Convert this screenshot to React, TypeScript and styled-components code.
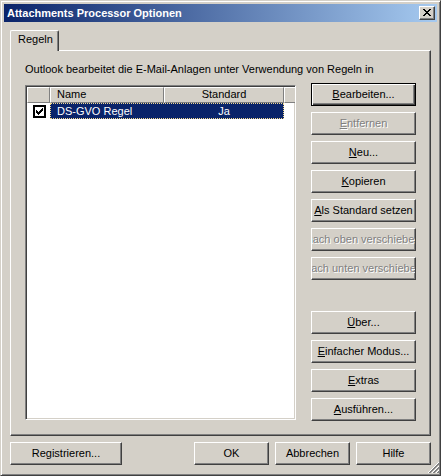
import React from "react";
import styled, { createGlobalStyle, css } from "styled-components";

const Global = createGlobalStyle`
  html, body { margin: 0; padding: 0; background: #d4d0c8; }
  body {
    font-family: "Liberation Sans", Arial, sans-serif;
    font-size: 11px;
    color: #000;
  }
  * { box-sizing: border-box; }
`;

const Window = styled.div`
  position: relative;
  width: 441px;
  height: 476px;
  display: flex;
  flex-direction: column;
  background: #d4d0c8;
  border: 1px solid;
  border-color: #d4d0c8 #404040 #404040 #d4d0c8;
  box-shadow: inset 1px 1px 0 #fff, inset -1px -1px 0 #808080;
  padding: 3px;
`;

const TitleBar = styled.div`
  height: 18px;
  flex: none;
  display: flex;
  align-items: center;
  justify-content: space-between;
  padding: 0 2px 0 3px;
  background: linear-gradient(to right, #0a246a, #a6caf0);
  color: #fff;
  font-weight: bold;
  font-size: 11px;
  white-space: nowrap;
`;

const CloseButton = styled.div`
  width: 16px;
  height: 14px;
  display: flex;
  align-items: center;
  justify-content: center;
  background: #d4d0c8;
  border: 1px solid;
  border-color: #fff #404040 #404040 #fff;
  box-shadow: inset -1px -1px 0 #808080;
  padding-right: 1px;
  padding-bottom: 1px;
`;

const Body = styled.div`
  flex: 1;
  display: flex;
  flex-direction: column;
  padding: 8px 6px 7px 6px;
`;

const TabStrip = styled.div`
  display: flex;
  height: 20px;
`;

const Tab = styled.div`
  position: relative;
  z-index: 1;
  width: 49px;
  height: 21px;
  margin-bottom: -1px;
  background: #d4d0c8;
  border-style: solid;
  border-width: 1px 1px 0 1px;
  border-color: #fff #404040 #fff #fff;
  border-radius: 2px 2px 0 0;
  box-shadow: inset -1px 0 0 #808080;
  padding: 2px 0 0 7px;
  line-height: 13px;
`;

const Panel = styled.div`
  height: 386px;
  border: 1px solid;
  border-color: #fff #404040 #404040 #fff;
  box-shadow: inset -1px -1px 0 #808080;
  padding: 12px 13px 13px 14px;
  display: grid;
  grid-template-columns: 271px 105px;
  grid-template-rows: 13px 338px;
  column-gap: 15px;
  row-gap: 7px;
`;

const Description = styled.div`
  grid-column: 1 / -1;
  line-height: 13px;
  white-space: nowrap;
`;

const ListFrame = styled.div`
  margin-top: 2px;
  height: 335px;
  background: #fff;
  border: 1px solid;
  border-color: #808080 #fff #fff #808080;
  box-shadow: inset 1px 1px 0 #404040, inset -1px -1px 0 #d4d0c8;
  padding: 1px;
  display: flex;
  flex-direction: column;
  overflow: hidden;
`;

const HeaderRow = styled.div`
  display: grid;
  grid-template-columns: 23px 114px 120px 1fr;
  height: 16px;
  flex: none;
`;

const HeaderCell = styled.div<{ $align?: "left" | "center" }>`
  background: #d4d0c8;
  border: 1px solid;
  border-color: #fff #808080 #808080 #fff;
  padding: 0 6px;
  line-height: 13px;
  text-align: ${(p) => p.$align ?? "left"};
  white-space: nowrap;
  overflow: hidden;
`;

const Row = styled.div`
  display: grid;
  grid-template-columns: 23px 234px;
  height: 16px;
  flex: none;
`;

const CheckCell = styled.div`
  display: flex;
  align-items: center;
  padding-left: 6px;
`;

const Checkbox = styled.div`
  width: 13px;
  height: 13px;
  border: 2px solid #000;
  background: #fff;
  display: flex;
  align-items: center;
  justify-content: center;
`;

const Selection = styled.div`
  display: grid;
  grid-template-columns: 114px 120px;
  background: #0a246a;
  color: #fff;
  outline: 1px dotted #f3d98e;
  outline-offset: -1px;
  line-height: 16px;
`;

const RowCell = styled.div<{ $align?: "left" | "center" }>`
  padding: 0 7px;
  text-align: ${(p) => p.$align ?? "left"};
  white-space: nowrap;
  overflow: hidden;
`;

const ButtonColumn = styled.div`
  display: flex;
  flex-direction: column;
  justify-content: space-between;
`;

const ButtonGroup = styled.div`
  display: flex;
  flex-direction: column;
  gap: 6px;
`;

const Button = styled.button<{ $w?: number; $default?: boolean }>`
  width: ${(p) => p.$w ?? 105}px;
  height: 23px;
  flex: none;
  display: flex;
  align-items: center;
  justify-content: center;
  overflow: hidden;
  white-space: nowrap;
  padding: 0 0 1px 0;
  margin: 0;
  font: inherit;
  font-size: 11px;
  color: #000;
  background: #d4d0c8;
  border: 1px solid;
  border-color: #fff #404040 #404040 #fff;
  box-shadow: inset -1px -1px 0 #808080;
  ${(p) =>
    p.$default &&
    css`
      border-color: #000;
      box-shadow: inset 1px 1px 0 #fff, inset -1px -1px 0 #404040,
        inset -2px -2px 0 #808080;
    `}
  &:disabled {
    color: #808080;
    text-shadow: 1px 1px 0 #fff;
  }
`;

const Key = styled.span`
  text-decoration: underline;
  text-underline-offset: 1px;
`;

const Footer = styled.div`
  display: flex;
  gap: 6px;
  margin-top: 6px;
`;

const Spacer = styled.div`
  flex: 1;
`;

const Grip = styled.svg`
  position: absolute;
  right: 1px;
  bottom: 1px;
`;

const closePixels = [
  "XX....XX",
  ".XX..XX.",
  "..XXXX..",
  "...XX...",
  "..XXXX..",
  ".XX..XX.",
  "XX....XX",
];

const checkPixels = [
  "......X",
  ".....XX",
  "X...XXX",
  "XX.XXX.",
  "XXXXX..",
  ".XXX...",
  "..X....",
];

const PixelIcon: React.FC<{ rows: string[] }> = ({ rows }) => (
  <svg
    width={rows[0].length}
    height={rows.length}
    shapeRendering="crispEdges"
    style={{ display: "block" }}
  >
    {rows.flatMap((r, y) =>
      r.split("").map((c, x) =>
        c === "X" ? <rect key={`${x}-${y}`} x={x} y={y} width={1} height={1} fill="#000" /> : null
      )
    )}
  </svg>
);

const gripLines: { c: number; color: string }[] = [
  { c: 11, color: "#fff" },
  { c: 12, color: "#808080" },
  { c: 13, color: "#808080" },
  { c: 15, color: "#fff" },
  { c: 16, color: "#808080" },
  { c: 17, color: "#808080" },
  { c: 19, color: "#fff" },
  { c: 20, color: "#808080" },
  { c: 21, color: "#808080" },
];

const SideButton: React.FC<{
  label: React.ReactNode;
  disabled?: boolean;
  isDefault?: boolean;
}> = ({ label, disabled, isDefault }) => (
  <Button disabled={disabled} $default={isDefault}>
    <span>{label}</span>
  </Button>
);

export default function App() {
  return (
    <>
      <Global />
      <Window>
        <TitleBar>
          <span>Attachments Processor Optionen</span>
          <CloseButton>
            <PixelIcon rows={closePixels} />
          </CloseButton>
        </TitleBar>
        <Body>
          <TabStrip>
            <Tab>Regeln</Tab>
          </TabStrip>
          <Panel>
            <Description>
              Outlook bearbeitet die E-Mail-Anlagen unter Verwendung von Regeln in
            </Description>
            <ListFrame>
              <HeaderRow>
                <HeaderCell />
                <HeaderCell>Name</HeaderCell>
                <HeaderCell $align="center">Standard</HeaderCell>
                <HeaderCell />
              </HeaderRow>
              <Row>
                <CheckCell>
                  <Checkbox>
                    <PixelIcon rows={checkPixels} />
                  </Checkbox>
                </CheckCell>
                <Selection>
                  <RowCell>DS-GVO Regel</RowCell>
                  <RowCell $align="center">Ja</RowCell>
                </Selection>
              </Row>
            </ListFrame>
            <ButtonColumn>
              <ButtonGroup>
                <SideButton isDefault label={<><Key>B</Key>earbeiten...</>} />
                <SideButton disabled label={<><Key>E</Key>ntfernen</>} />
                <SideButton label={<><Key>N</Key>eu...</>} />
                <SideButton label={<><Key>K</Key>opieren</>} />
                <SideButton label={<><Key>A</Key>ls Standard setzen</>} />
                <SideButton disabled label={<>nach oben verschieben</>} />
                <SideButton disabled label={<>nach unten verschieben</>} />
              </ButtonGroup>
              <ButtonGroup>
                <SideButton label={<><Key>Ü</Key>ber...</>} />
                <SideButton label={<><Key>E</Key>infacher Modus...</>} />
                <SideButton label={<><Key>E</Key>xtras</>} />
                <SideButton label={<><Key>A</Key>usführen...</>} />
              </ButtonGroup>
            </ButtonColumn>
          </Panel>
          <Footer>
            <Button $w={112}>Registrieren...</Button>
            <Spacer />
            <Button $w={75}>OK</Button>
            <Button $w={75}>Abbrechen</Button>
            <Button $w={75}>Hilfe</Button>
          </Footer>
        </Body>
        <Grip width={12} height={12} shapeRendering="crispEdges">
          {gripLines.map((l) => (
            <line
              key={l.c}
              x1={l.c - 11 + 0.5}
              y1={11.5}
              x2={11.5}
              y2={l.c - 11 + 0.5}
              stroke={l.color}
              strokeWidth={1}
            />
          ))}
        </Grip>
      </Window>
    </>
  );
}
